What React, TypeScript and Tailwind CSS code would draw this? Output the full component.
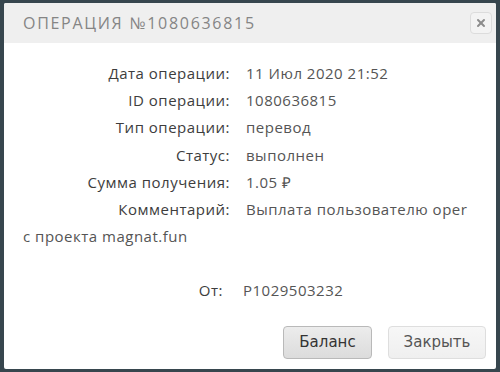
import { X } from 'lucide-react';

const rows: [string, string][] = [
  ['Дата операции:', '11 Июл 2020 21:52'],
  ['ID операции:', '1080636815'],
  ['Тип операции:', 'перевод'],
  ['Статус:', 'выполнен'],
  ['Сумма получения:', '1.05 ₽'],
];

export default function App() {
  return (
    <div className="w-[500px] h-[372px] bg-[#37464e] pt-[3px] px-[4px] pb-[3px] flex">
      <div className="flex-1 flex flex-col bg-white rounded-[2px] overflow-hidden">
        <div className="h-[40px] shrink-0 bg-[#efefef] flex items-center justify-between pl-[19px] pr-[4px]">
          <h2 className="font-['Open_Sans',sans-serif] text-[16px] tracking-[1.7px] text-[#858585]">
            ОПЕРАЦИЯ №1080636815
          </h2>
          <button className="w-[22px] h-[22px] rounded-[4px] border border-[#dcdcdc] bg-[#f3f3f3] flex items-center justify-center text-[#8c8c8c]">
            <X size={12} strokeWidth={4} />
          </button>
        </div>

        <div className="flex-1 flex flex-col px-[19px] pt-[17px] font-['Open_Sans',sans-serif] text-[15px] tracking-[0.5px] leading-[27.2px] text-[#555]">
          {rows.map(([k, v]) => (
            <div key={k}>
              <span className="inline-block w-[207px] mr-[16px] text-right text-[#3d3d3d]">{k}</span>
              {v}
            </div>
          ))}
          <div>
            <span className="inline-block w-[207px] mr-[16px] text-right text-[#3d3d3d]">Комментарий:</span>
            Выплата пользователю oper
            <br />
            с проекта magnat.fun
          </div>
          <div className="mt-[27px]">
            <span className="inline-block w-[200px] mr-[20px] text-right text-[#3d3d3d]">От:</span>
            P1029503232
          </div>

          <div className="mt-auto mb-[10px] flex justify-end gap-[16px] -mr-[9px] font-['DejaVu_Sans',sans-serif] text-[15px] tracking-normal">
            <button className="w-[89px] h-[33px] rounded-[4px] border border-[#b9b9b9] bg-gradient-to-b from-[#ececec] to-[#dcdcdc] text-[#333]">
              Баланс
            </button>
            <button className="w-[98px] h-[33px] rounded-[4px] border border-[#dedede] bg-gradient-to-b from-[#f7f7f7] to-[#efefef] text-[#555]">
              Закрыть
            </button>
          </div>
        </div>
      </div>
    </div>
  );
}
